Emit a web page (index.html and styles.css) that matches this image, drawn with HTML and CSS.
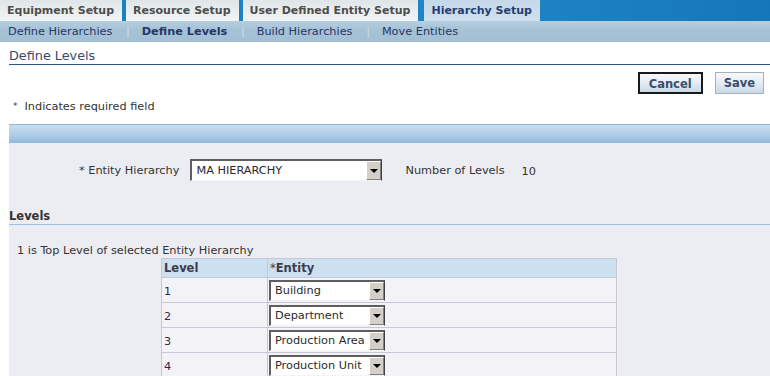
FILE: index.html
```html
<!DOCTYPE html>
<html>
<head>
<meta charset="utf-8">
<link rel="stylesheet" href="styles.css">
</head>
<body>
<div class="tabs">
  <div class="tab">Equipment Setup</div>
  <div class="tab">Resource Setup</div>
  <div class="tab">User Defined Entity Setup</div>
  <div class="tab active">Hierarchy Setup</div>
</div>
<div class="subtabs">
  <a class="sublink">Define Hierarchies</a><span class="sep">|</span>
  <a class="sublink current">Define Levels</a><span class="sep">|</span>
  <a class="sublink">Build Hierarchies</a><span class="sep">|</span>
  <a class="sublink">Move Entities</a>
</div>
<div class="page">
  <h1 class="title">Define Levels</h1>
  <div class="actions">
    <button class="btn default">Cancel</button>
    <button class="btn">Save</button>
  </div>
  <div class="req"><span class="req-star">*</span>Indicates required field</div>
  <div class="bar"></div>
  <div class="panel">
    <div class="field-row">
      <label class="label"><span class="star">*</span> Entity Hierarchy</label>
      <div class="select wide"><span class="val">MA HIERARCHY</span><span class="arrow"><i class="tri"></i></span></div>
      <span class="label count-label">Number of Levels</span>
      <span class="count">10</span>
    </div>
    <h2 class="sub">Levels</h2>
    <p class="note">1 is Top Level of selected Entity Hierarchy</p>
    <table class="levels">
      <thead>
        <tr><th class="c-level">Level</th><th class="c-entity"><span class="hstar">*</span>Entity</th></tr>
      </thead>
      <tbody>
        <tr><td class="num">1</td><td><div class="select small"><span class="val">Building</span><span class="arrow"><i class="tri"></i></span></div></td></tr>
        <tr><td class="num">2</td><td><div class="select small"><span class="val">Department</span><span class="arrow"><i class="tri"></i></span></div></td></tr>
        <tr><td class="num">3</td><td><div class="select small"><span class="val">Production Area</span><span class="arrow"><i class="tri"></i></span></div></td></tr>
        <tr><td class="num">4</td><td><div class="select small"><span class="val">Production Unit</span><span class="arrow"><i class="tri"></i></span></div></td></tr>
      </tbody>
    </table>
  </div>
</div>
</body>
</html>
```

FILE: styles.css
```css
html, body {
  margin: 0;
  padding: 0;
  background: #ffffff;
  font-family: "DejaVu Sans", Verdana, sans-serif;
  font-size: 11.3px;
  color: #333333;
  overflow: hidden;
}

.tabs {
  display: flex;
  gap: 4px;
  height: 21px;
  background: linear-gradient(90deg, #1b7dbf 0%, #1f86c6 60%, #1677b8 100%);
}
.tab {
  padding: 0 8px 0 7px;
  line-height: 21px;
  font-weight: bold;
  font-size: 11px;
  color: #4d4d4d;
  background: linear-gradient(#dfe5e8, #f3f5f5);
  white-space: nowrap;
}
.tab.active {
  background: linear-gradient(#c4d8e9, #cfe0ee);
  color: #283c70;
  margin-left: 2px;
}

.subtabs {
  display: flex;
  align-items: center;
  height: 21px;
  padding-left: 8px;
  background: linear-gradient(#b6cfe1, #a6c2d5 40%, #a3bfd3);
  color: #27366a;
  white-space: nowrap;
}
.sublink { color: #27366a; }
.sublink.current { font-weight: bold; font-size: 11.3px; }
.sep {
  color: #d4e0ea;
  margin: 0 12px 0 14px;
  font-size: 10px;
}

.page {
  padding-left: 9px;
}
.title {
  margin: 0;
  padding-top: 6px;
  font-size: 12.8px;
  font-weight: normal;
  line-height: 16px;
  color: #3a4a6e;
  border-bottom: 1px solid #2f5587;
}

.actions {
  display: flex;
  justify-content: flex-end;
  gap: 12px;
  padding: 7px 6px 0 0;
}
.btn {
  font-family: "DejaVu Sans", Verdana, sans-serif;
  font-size: 11.5px;
  font-weight: bold;
  color: #3b4d6e;
  height: 22px;
  padding: 0 8px;
  border: 1px solid #a7b0ba;
  background: linear-gradient(#f7f9fb, #e4ecf4 50%, #c9d9e8);
  line-height: 20px;
}
.btn.default {
  border: 2px solid #1a1a1a;
  padding: 0 9px;
}

.req {
  margin-top: 5px;
  padding-left: 4px;
  line-height: 14px;
  color: #333333;
}
.req-star {
  color: #2a3c70;
  font-size: 9px;
  margin-right: 7px;
  vertical-align: 1px;
}

.bar {
  margin-top: 10px;
  height: 18px;
  border-top: 1px solid #95b5d3;
  background: linear-gradient(#c9ddee, #b3cfe7 50%, #8fb7dc);
}

.panel {
  background: #ecedf2;
  height: 240px;
  padding-top: 16px;
}

.field-row {
  display: flex;
  align-items: center;
  height: 22px;
  padding-left: 70px;
}
.label {
  color: #333333;
}
.star { color: #333; }
.field-row .select { margin-left: 11px; }
.count-label { margin-left: 23px; }
.count { margin-left: 17px; padding-top: 2px; }

.select {
  display: flex;
  background: #ffffff;
  border-top: 2px solid #5f5f5f;
  border-left: 2px solid #5f5f5f;
  border-bottom: 1px solid #f4f4f4;
  border-right: 1px solid #404040;
  box-sizing: border-box;
}
.select .val {
  flex: 1;
  padding-left: 4px;
  color: #2b2b2b;
  white-space: nowrap;
  overflow: hidden;
}
.select .arrow {
  width: 15px;
  display: flex;
  align-items: center;
  justify-content: center;
  background: #d4d0c8;
  border-left: 1px solid #ffffff;
  border-top: 1px solid #ffffff;
  border-bottom: 1px solid #808080;
  border-right: 1px solid #808080;
  box-sizing: border-box;
}
.tri {
  display: block;
  width: 0;
  height: 0;
  border-left: 4px solid transparent;
  border-right: 4px solid transparent;
  border-top: 4px solid #000000;
}
.select.wide {
  width: 192px;
  height: 22px;
  line-height: 19px;
}
.select.small {
  width: 116px;
  height: 21px;
  line-height: 18px;
}

.sub {
  margin: 28px 0 0 0;
  font-size: 11.5px;
  font-weight: bold;
  line-height: 15px;
  color: #333333;
  border-bottom: 1px solid #9ec1e2;
  padding-bottom: 0;
}
.note {
  margin: 19px 0 0 8px;
  line-height: 14px;
}

.levels {
  margin: 0 0 0 152px;
  width: 456px;
  border-collapse: collapse;
  background: #f3f2f6;
}
.levels th {
  background: #cce0f0;
  text-align: left;
  font-weight: bold;
  font-size: 11.5px;
  color: #3c3c4c;
  height: 18px;
  padding: 0 0 0 2px;
  border: 1px solid #c8c7d7;
  line-height: 16px;
}
.levels th.c-level { width: 103px; }
.levels .hstar { font-weight: normal; }
.levels td {
  height: 24px;
  padding: 0 0 0 1px;
  border: 1px solid #c8c7d7;
  vertical-align: middle;
}
.levels td.num {
  padding-left: 2px;
  vertical-align: bottom;
  line-height: 20px;
  color: #3a2440;
}
```
